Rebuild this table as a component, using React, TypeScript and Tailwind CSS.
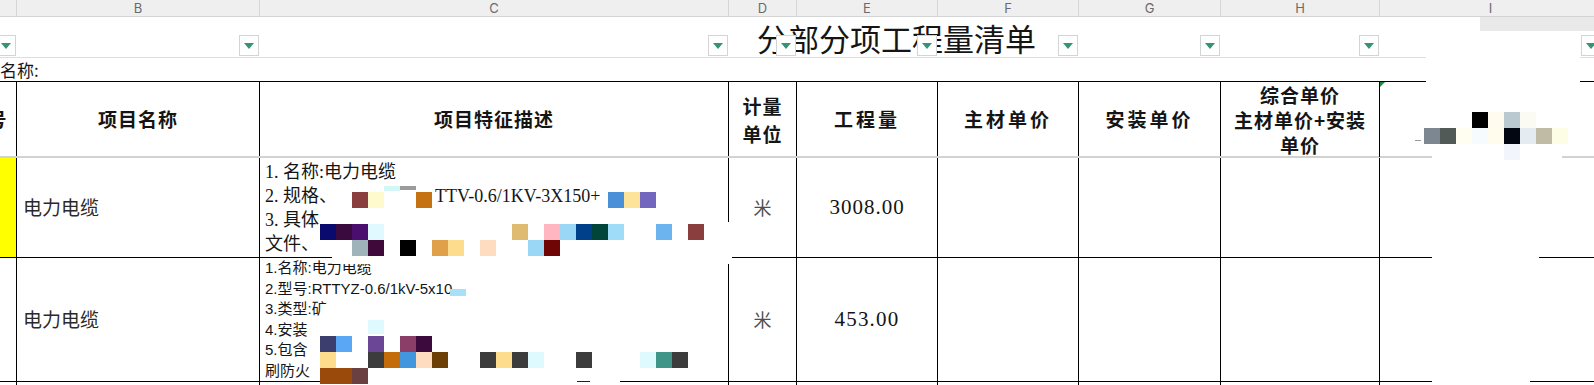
import React from 'react'

const cols = 'grid grid-cols-[60px_243px_469px_68px_141px_141px_142px_159px_222px]'
const letters = ['A', 'B', 'C', 'D', 'E', 'F', 'G', 'H', 'I']

type Block = [number, number, number, number, string]

// pixelated (mosaic) patches laid over the sheet
const blocks: Block[] = [
  // row 4, description cell
  [336, 186, 96, 22, '#ffffff'],
  [608, 190, 48, 18, '#ffffff'],
  [384, 186, 16, 5, '#d3f6f6'],
  [400, 186, 16, 4, '#9b9b9b'],
  [352, 192, 16, 16, '#8b3e3e'],
  [368, 192, 16, 16, '#fffacd'],
  [416, 192, 16, 16, '#c47212'],
  [608, 192, 16, 16, '#4a90d9'],
  [624, 192, 16, 16, '#fde29a'],
  [640, 192, 16, 16, '#7366be'],
  [320, 222, 412, 18, '#ffffff'],
  [332, 240, 400, 24, '#ffffff'],
  [320, 224, 16, 16, '#0a0a6e'],
  [336, 224, 16, 16, '#3a0a3e'],
  [352, 224, 16, 16, '#4a0f6e'],
  [368, 224, 16, 16, '#e0f8ff'],
  [512, 224, 16, 16, '#dfbb71'],
  [544, 224, 16, 16, '#ffb6c1'],
  [560, 224, 16, 16, '#9ad6f6'],
  [576, 224, 16, 16, '#003f8a'],
  [592, 224, 16, 16, '#00443a'],
  [608, 224, 16, 16, '#9edcf8'],
  [656, 224, 16, 16, '#6cb4f0'],
  [688, 224, 16, 16, '#8b3e3e'],
  [352, 240, 16, 16, '#9fb4ba'],
  [368, 240, 16, 16, '#3f0a3a'],
  [400, 240, 16, 16, '#000000'],
  [432, 240, 16, 16, '#e0a04a'],
  [448, 240, 16, 16, '#fedc8e'],
  [480, 240, 16, 16, '#fedcc0'],
  [528, 240, 16, 16, '#9ad6f6'],
  [544, 240, 16, 16, '#6f0505'],
  // row 5, description cell
  [450, 289, 16, 7, '#a8e0f8'],
  [368, 320, 16, 14, '#dffaff'],
  [320, 336, 16, 16, '#3c3f6e'],
  [336, 336, 16, 16, '#5aa8f5'],
  [368, 336, 16, 16, '#6b4696'],
  [400, 336, 16, 16, '#8b3e68'],
  [416, 336, 16, 16, '#3d0a3e'],
  [320, 352, 16, 16, '#fedc8e'],
  [368, 352, 16, 16, '#3c3c3c'],
  [384, 352, 16, 16, '#c46c0a'],
  [400, 352, 16, 16, '#4196de'],
  [416, 352, 16, 16, '#fedcc0'],
  [432, 352, 16, 16, '#6b3f05'],
  [480, 352, 16, 16, '#3c3c3c'],
  [496, 352, 16, 16, '#fedc8e'],
  [512, 352, 16, 16, '#3c3c3c'],
  [528, 352, 16, 16, '#dffaff'],
  [576, 352, 16, 16, '#3c3c3c'],
  [640, 352, 16, 16, '#dffaff'],
  [656, 352, 16, 16, '#3f9688'],
  [672, 352, 16, 16, '#3c3c3c'],
  [320, 368, 300, 18, '#ffffff'],
  [320, 368, 32, 16, '#9a4a0a'],
  [352, 368, 16, 16, '#6b4040'],
  [577, 381, 13, 1, '#222222'],
  // column I
  [1480, 17, 114, 14, '#e9e9e9'],
  [1426, 31, 154, 56, '#ffffff'],
  [1432, 87, 130, 75, '#ffffff'],
  [1432, 162, 107, 100, '#ffffff'],
  [1432, 262, 98, 123, '#ffffff'],
  [1472, 112, 16, 16, '#000000'],
  [1488, 112, 16, 16, '#fffbee'],
  [1504, 112, 16, 16, '#b9c9cf'],
  [1520, 112, 16, 16, '#fbfbf4'],
  [1424, 128, 16, 16, '#7d8792'],
  [1440, 128, 16, 16, '#525a58'],
  [1456, 128, 16, 16, '#fffef0'],
  [1472, 128, 16, 16, '#f6fbfd'],
  [1488, 128, 16, 16, '#fffcee'],
  [1504, 128, 16, 16, '#030712'],
  [1520, 128, 16, 16, '#e4ebf1'],
  [1536, 128, 16, 16, '#bfbba5'],
  [1552, 128, 16, 16, '#fdfde6'],
  [1504, 144, 16, 16, '#f2f5fb'],
  [1415, 140, 6, 1, '#999999'],
]

function FilterButton() {
  return (
    <div className="w-[20px] h-[21px] bg-white border border-[#d4d4d4] flex items-center justify-center">
      <div className="w-0 h-0 border-l-[5px] border-r-[5px] border-t-[6px] border-l-transparent border-r-transparent border-t-[#349473]" />
    </div>
  )
}

export default function App() {
  const cell = 'border-r border-black flex items-center justify-center'
  return (
    <div className="relative w-[1594px] h-[385px] overflow-hidden bg-white text-[#151515] font-['Noto_Sans_CJK_SC',sans-serif]">
      <div className="-ml-[43px] w-[1645px] flex flex-col">
        {/* column letters */}
        <div className={`${cols} h-[17px] bg-[#efefef] border-b border-[#d3d3d3]`}>
          {letters.map(l => (
            <div key={l} className="border-r border-[#d6d6d6] flex items-center justify-center overflow-hidden">
              <span className="text-[13px] leading-none text-[#6a6a6a] font-['Inter',sans-serif]">{l}</span>
            </div>
          ))}
        </div>

        {/* title row */}
        <div className="relative h-[41px] border-b border-[#dedede] flex items-center">
          <span className="pl-[800px] text-[31px] leading-none whitespace-nowrap">分部分项工程量清单</span>
          <div className={`${cols} absolute inset-0`}>
            {letters.map(l => (
              <div key={l} className="flex items-end justify-end pr-[1px] pb-[1px]">
                <FilterButton />
              </div>
            ))}
          </div>
        </div>

        {/* project name row */}
        <div className="h-[23px] flex items-center pl-[9px]">
          <span className="text-[17px] leading-none">工程名称:</span>
        </div>

        {/* header row */}
        <div className={`${cols} h-[75px] border-t border-black font-bold text-[19px]`}>
          <div className={`${cell} pl-[2px]`}><span className="tracking-[1px]">序号</span></div>
          <div className={cell}><span className="tracking-[1px]">项目名称</span></div>
          <div className={cell}><span className="tracking-[1px]">项目特征描述</span></div>
          <div className={`${cell} flex-col leading-[28px] tracking-[1px]`}>
            <span>计量</span>
            <span>单位</span>
          </div>
          <div className={cell}><span className="tracking-[3px]">工程量</span></div>
          <div className={cell}><span className="tracking-[3px]">主材单价</span></div>
          <div className={cell}><span className="tracking-[3px]">安装单价</span></div>
          <div className={`${cell} flex-col leading-[25px] tracking-[1px] relative`}>
            <span>综合单价</span>
            <span>主材单价+安装</span>
            <span>单价</span>
            <div className="absolute right-[-6px] top-0 w-0 h-0 border-t-[5px] border-r-[5px] border-t-[#1f8a3a] border-r-transparent" />
          </div>
          <div />
        </div>
        <div className="h-[2px] bg-[#d2d2d2]" />

        {/* row 1 */}
        <div className={`${cols} h-[100px] border-b border-black`}>
          <div className="border-r border-black bg-[#ffff00]" />
          <div className="border-r border-black flex items-center pl-[6px] text-[19px] text-[#2a2a2a]">电力电缆</div>
          <div className="border-r border-black flex flex-col justify-center pl-[5px] text-[18px] leading-[24px] font-['Liberation_Serif','Noto_Sans_CJK_SC',serif] whitespace-nowrap">
            <span>1. 名称:电力电缆</span>
            <span><span className="inline-block w-[170px]">2. 规格、</span>TTV-0.6/1KV-3X150+</span>
            <span>3. 具体</span>
            <span>文件、</span>
          </div>
          <div className={`${cell} text-[18px] text-[#505050]`}>米</div>
          <div className={`${cell} text-[21px] tracking-[1px] font-['Liberation_Serif',serif]`}>3008.00</div>
          <div className={cell} />
          <div className={cell} />
          <div className={cell} />
          <div />
        </div>

        {/* row 2 */}
        <div className={`${cols} h-[124px] border-b border-black`}>
          <div className="border-r border-black" />
          <div className="border-r border-black flex items-center pl-[6px] text-[19px] text-[#2a2a2a]">电力电缆</div>
          <div className="border-r border-black flex flex-col justify-center pl-[5px] text-[15px] leading-[20.5px] font-['Liberation_Sans','Noto_Sans_CJK_SC',sans-serif] whitespace-nowrap">
            <span>1.名称:电力电缆</span>
            <span>2.型号:RTTYZ-0.6/1kV-5x10</span>
            <span>3.类型:矿</span>
            <span>4.安装</span>
            <span>5.包含</span>
            <span>刷防火</span>
          </div>
          <div className={`${cell} text-[18px] text-[#505050]`}>米</div>
          <div className={`${cell} text-[21px] tracking-[1.2px] font-['Liberation_Serif',serif]`}>453.00</div>
          <div className={cell} />
          <div className={cell} />
          <div className={cell} />
          <div />
        </div>

        {/* next row, cut off */}
        <div className={`${cols} h-[12px]`}>
          {letters.map(l => (
            <div key={l} className={l === 'I' ? '' : 'border-r border-black'} />
          ))}
        </div>
      </div>

      <div className="absolute inset-0 pointer-events-none">
        {blocks.map(([x, y, w, h, c], i) => (
          <div key={i} className="absolute" style={{ left: x, top: y, width: w, height: h, background: c }} />
        ))}
      </div>
    </div>
  )
}
